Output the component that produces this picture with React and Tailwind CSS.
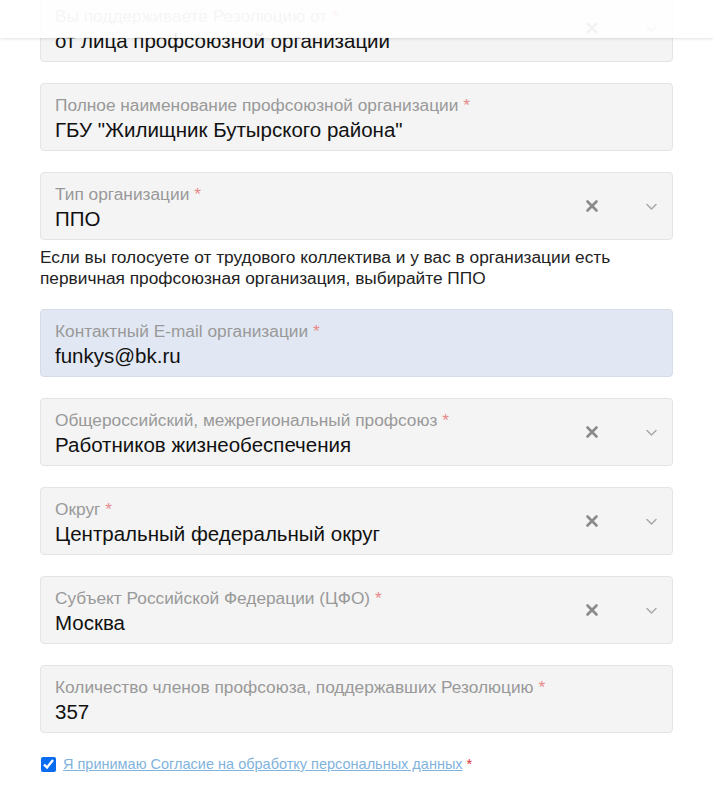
import { useState } from 'react';

const fields = [
  { label: 'Вы поддерживаете Резолюцию от', value: 'от лица профсоюзной организации', select: true },
  { label: 'Полное наименование профсоюзной организации', value: 'ГБУ "Жилищник Бутырского района"' },
  {
    label: 'Тип организации',
    value: 'ППО',
    select: true,
    hint: 'Если вы голосуете от трудового коллектива и у вас в организации есть первичная профсоюзная организация, выбирайте ППО',
  },
  { label: 'Контактный E-mail организации', value: 'funkys@bk.ru', autofill: true },
  { label: 'Общероссийский, межрегиональный профсоюз', value: 'Работников жизнеобеспечения', select: true },
  { label: 'Округ', value: 'Центральный федеральный округ', select: true },
  { label: 'Субъект Российской Федерации (ЦФО)', value: 'Москва', select: true },
  { label: 'Количество членов профсоюза, поддержавших Резолюцию', value: '357' },
];

function ClearIcon() {
  return (
    <svg width="14" height="14" viewBox="0 0 14 14" className="text-[#8a8a8a]">
      <path d="M2.5 2.5 L11.5 11.5 M11.5 2.5 L2.5 11.5" stroke="currentColor" strokeWidth="2.6" strokeLinecap="round" />
    </svg>
  );
}

function ChevronIcon() {
  return (
    <svg width="13" height="13" viewBox="0 0 13 13" className="text-[#a8a8a8]">
      <path d="M2 4.5 L6.5 9 L11 4.5" stroke="currentColor" strokeWidth="1.5" fill="none" strokeLinecap="round" strokeLinejoin="round" />
    </svg>
  );
}

function Field({ label, value, select, autofill }) {
  return (
    <div
      className={`h-[68px] rounded-[4px] border flex items-center pl-[14px] pr-[14px] ${
        autofill ? 'bg-[#e2e8f3] border-[#d6dce6]' : 'bg-[#f4f4f4] border-[#e4e4e4]'
      }`}
    >
      <div className="flex-1 min-w-0 self-start pt-[11px]">
        <div className="text-[17.3px] leading-[20px] text-[#999999] whitespace-nowrap">
          {label} <span className="text-[#e88a8a]">*</span>
        </div>
        <div className="mt-[2px] text-[20.5px] leading-[26px] text-[#111111] truncate">{value}</div>
      </div>
      {select && (
        <div className="flex items-center gap-[46px]">
          <ClearIcon />
          <ChevronIcon />
        </div>
      )}
    </div>
  );
}

export default function App() {
  const [agreed, setAgreed] = useState(true);

  return (
    <div className="relative min-h-[791px] bg-white overflow-hidden" style={{ fontFamily: '"Liberation Sans", Arial, sans-serif' }}>
      {/* Fixed header overlay */}
      <div className="absolute top-0 left-0 right-0 h-[38px] bg-white/90 shadow-[0_1px_3px_rgba(0,0,0,0.12)] z-10" />

      <div className="mx-[40px] -mt-[6px] w-[633px]">
        {fields.map((f, i) => (
          <div key={i} className={f.hint ? 'mb-[20px]' : 'mb-[21px]'}>
            <Field {...f} />
            {f.hint && (
              <p className="mt-[7px] text-[17.3px] leading-[21px] text-[#222222] pr-[40px]">{f.hint}</p>
            )}
          </div>
        ))}

        <label className="flex items-center gap-[7px] mt-[15px] text-[14.5px] leading-[20px]">
          <input
            type="checkbox"
            checked={agreed}
            onChange={() => setAgreed(!agreed)}
            className="w-[15px] h-[15px] m-0 ml-[1px] accent-[#0a6cf0]"
          />
          <span>
            <a href="#" className="text-[#7fb3dd] underline">Я принимаю Согласие на обработку персональных данных</a>
            <span className="text-[#d33] ml-[4px]">*</span>
          </span>
        </label>
      </div>
    </div>
  );
}
